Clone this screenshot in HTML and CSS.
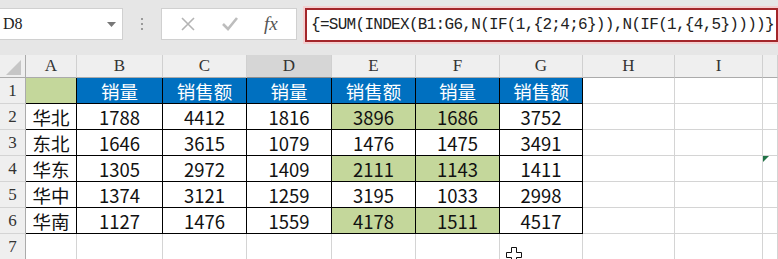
FILE: index.html
```html
<!DOCTYPE html>
<html lang="zh-CN">
<head>
  <meta charset="UTF-8" />
  <title>Sheet1</title>
  <link rel="stylesheet" href="styles.css">
</head>
<body>
  <div class="toolbar">
    <div class="namebox">
      <span class="ref">D8</span>
      <svg class="caret" width="9" height="5" viewBox="0 0 9 5"><path d="M0 0h9L4.5 5z" fill="#777"/></svg>
    </div>
    <div class="grip"><i></i><i></i><i></i></div>
    <div class="fxbox">
      <svg width="16" height="16" viewBox="0 0 16 16"><path d="M2 2l12 12M14 2L2 14" stroke="#b4b4b4" stroke-width="1.6" fill="none"/></svg>
      <svg width="18" height="16" viewBox="0 0 18 16"><path d="M2 8l5 5L16 2" stroke="#bdbdbd" stroke-width="2.6" fill="none"/></svg>
      <span class="fx">fx</span>
    </div>
    <div class="formula">{=SUM(INDEX(B1:G6,N(IF(1,{2;4;6})),N(IF(1,{4,5}))))}</div>
  </div>

  <div class="sheet">
    <div class="corner"><span class="tri"></span></div>
    <div class="ch">A</div><div class="ch">B</div><div class="ch">C</div><div class="ch sel">D</div><div class="ch">E</div><div class="ch">F</div><div class="ch">G</div><div class="ch">H</div><div class="ch">I</div><div class="ch"></div>

    <div class="rh">1</div>
    <div class="c t green"></div><div class="c t blue">销量</div><div class="c t blue">销售额</div><div class="c t blue">销量</div><div class="c t blue">销售额</div><div class="c t blue">销量</div><div class="c t blue">销售额</div><div class="c"></div><div class="c"></div><div class="c"></div>

    <div class="rh">2</div>
    <div class="c t">华北</div><div class="c t">1788</div><div class="c t">4412</div><div class="c t">1816</div><div class="c t green">3896</div><div class="c t green">1686</div><div class="c t">3752</div><div class="c"></div><div class="c"></div><div class="c"></div>

    <div class="rh">3</div>
    <div class="c t">东北</div><div class="c t">1646</div><div class="c t">3615</div><div class="c t">1079</div><div class="c t">1476</div><div class="c t">1475</div><div class="c t">3491</div><div class="c"></div><div class="c"></div><div class="c"></div>

    <div class="rh">4</div>
    <div class="c t">华东</div><div class="c t">1305</div><div class="c t">2972</div><div class="c t">1409</div><div class="c t green">2111</div><div class="c t green">1143</div><div class="c t">1411</div><div class="c"></div><div class="c"></div><div class="c flag"></div>

    <div class="rh">5</div>
    <div class="c t">华中</div><div class="c t">1374</div><div class="c t">3121</div><div class="c t">1259</div><div class="c t">3195</div><div class="c t">1033</div><div class="c t">2998</div><div class="c"></div><div class="c"></div><div class="c"></div>

    <div class="rh">6</div>
    <div class="c t">华南</div><div class="c t">1127</div><div class="c t">1476</div><div class="c t">1559</div><div class="c t green">4178</div><div class="c t green">1511</div><div class="c t">4517</div><div class="c"></div><div class="c"></div><div class="c"></div>

    <div class="rh">7</div>
    <div class="c"></div><div class="c"></div><div class="c"></div><div class="c"></div><div class="c"></div><div class="c"></div><div class="c cursor-cell"></div><div class="c"></div><div class="c"></div><div class="c"></div>
  </div>

  <svg class="cursor" width="16" height="16" viewBox="0 0 16 16"><path d="M5.5 0.5h5v5h5v5h-5v5h-5v-5h-5v-5h5z" fill="#fff" stroke="#111" stroke-width="1"/></svg>
</body>
</html>
```

FILE: styles.css
```css
* {
  box-sizing: border-box;
}
body {
  margin: 0;
  width: 778px;
  height: 259px;
  overflow: hidden;
  position: relative;
  background: #fff;
  font-family: "Noto Sans CJK SC", "Noto Sans", sans-serif;
  color: #111;
}
.toolbar {
  height: 55px;
  background: #e6e6e6;
  display: flex;
  align-items: flex-start;
  padding-top: 8px;
}
.namebox {
  width: 123px;
  height: 32px;
  background: #fff;
  border: 1px solid #d0d0d0;
  border-left: none;
  display: flex;
  align-items: center;
  justify-content: space-between;
  padding: 0 6px 0 3px;
}
.ref {
  font-family: "Liberation Serif", serif;
  font-size: 16px;
  color: #222;
}
.grip {
  width: 38px;
  display: flex;
  flex-direction: column;
  align-items: center;
  gap: 3px;
  padding-top: 10px;
}
.grip i {
  width: 2px;
  height: 2px;
  background: #9a9a9a;
}
.fxbox {
  width: 136px;
  height: 32px;
  background: #fff;
  border: 1px solid #d0d0d0;
  display: flex;
  align-items: center;
  justify-content: space-around;
  padding: 0 6px;
}
.fx {
  font-family: "Liberation Serif", serif;
  font-style: italic;
  font-size: 19px;
  color: #555;
}
.formula {
  flex: 1;
  margin-left: 8px;
  height: 34px;
  background: #fff;
  border: 2px solid #a3262a;
  box-shadow: 0 0 0 2px #f3cfd0;
  font-family: "Liberation Mono", monospace;
  font-size: 16px;
  letter-spacing: -0.7px;
  line-height: 30px;
  padding-left: 4px;
  white-space: nowrap;
  overflow: hidden;
  color: #222;
}
.sheet {
  display: grid;
  grid-template-columns: 26px 51px 86px 84px 85px 84px 84px 83px 92px 88px 1fr;
  grid-template-rows: 23px repeat(7, 26px);
}
.corner, .ch, .rh {
  background: #efefef;
  border-right: 1px solid #d0d0d0;
  border-bottom: 1px solid #ababab;
  font-family: "Liberation Serif", serif;
  font-size: 17px;
  color: #333;
  display: flex;
  align-items: center;
  justify-content: center;
}
.corner {
  position: relative;
  border-right-color: #ababab;
}
.tri {
  width: 0;
  height: 0;
  border-left: 15px solid transparent;
  border-bottom: 15px solid #c6c6c6;
  margin: 2px 0 0 2px;
}
.ch.sel {
  background: #d6d6d6;
  border-bottom-color: #8f8f8f;
}
.rh {
  border-right-color: #ababab;
  border-bottom-color: #d4d4d4;
}
.c {
  border-right: 1px solid #d4d4d4;
  border-bottom: 1px solid #d4d4d4;
  display: flex;
  align-items: center;
  justify-content: center;
  font-size: 18.5px;
}
.c.t {
  border-color: #000;
}
.green {
  background: #c4d79b;
}
.blue {
  background: #0070c0;
  color: #fff;
}
.flag {
  position: relative;
}
.flag::before {
  content: "";
  position: absolute;
  left: 0;
  top: 0;
  border-top: 6px solid #217346;
  border-right: 6px solid transparent;
}
.cursor {
  position: absolute;
  left: 506px;
  top: 247px;
}
```
